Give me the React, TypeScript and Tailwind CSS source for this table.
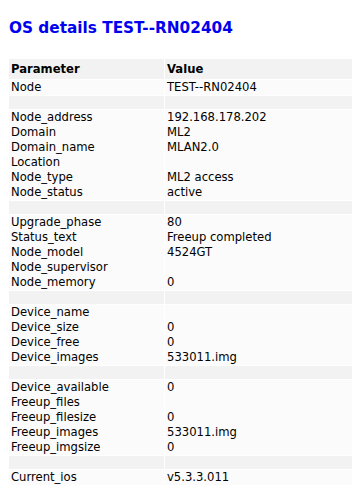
const groups: [string, string][][] = [
  [["Node", "TEST--RN02404"]],
  [
    ["Node_address", "192.168.178.202"],
    ["Domain", "ML2"],
    ["Domain_name", "MLAN2.0"],
    ["Location", ""],
    ["Node_type", "ML2 access"],
    ["Node_status", "active"],
  ],
  [
    ["Upgrade_phase", "80"],
    ["Status_text", "Freeup completed"],
    ["Node_model", "4524GT"],
    ["Node_supervisor", ""],
    ["Node_memory", "0"],
  ],
  [
    ["Device_name", ""],
    ["Device_size", "0"],
    ["Device_free", "0"],
    ["Device_images", "533011.img"],
  ],
  [
    ["Device_available", "0"],
    ["Freeup_files", ""],
    ["Freeup_filesize", "0"],
    ["Freeup_images", "533011.img"],
    ["Freeup_imgsize", "0"],
  ],
  [["Current_ios", "v5.3.3.011"]],
]

export default function App() {
  return (
    <main className="min-h-screen bg-white pl-2 pt-[18px] text-black" style={{ fontFamily: '"DejaVu Sans", Verdana, sans-serif' }}>
      <h1 className="text-[15.3px] font-bold leading-[20px] text-[#0000ee] ml-px">OS details TEST--RN02404</h1>

      <table className="mt-[20px] w-[calc(100%-7px)] border-separate border-spacing-[1px] text-[11.6px] leading-[15px]">
        <thead>
          <tr className="bg-[#f2f2f2]">
            <th className="w-[155px] h-[20px] px-[2px] text-left font-bold">Parameter</th>
            <th className="h-[20px] px-[2px] text-left font-bold">Value</th>
          </tr>
        </thead>
        <tbody>
          {groups.map((g, i) => (
            <>
              {i > 0 && (
                <tr key={"s" + i} className="bg-[#f2f2f2]">
                  <td className="h-[13px] p-0"></td>
                  <td className="h-[13px] p-0"></td>
                </tr>
              )}
              <tr key={"g" + i} className="bg-[#fbfbfb] align-top">
                <td className="px-[2px] py-0">
                  {g.map(([k]) => (
                    <div key={k} className="h-[15px] whitespace-nowrap">{k}</div>
                  ))}
                </td>
                <td className="px-[2px] py-0">
                  {g.map(([k, v]) => (
                    <div key={k} className="h-[15px] whitespace-nowrap">{v}</div>
                  ))}
                </td>
              </tr>
            </>
          ))}
        </tbody>
      </table>
    </main>
  )
}
